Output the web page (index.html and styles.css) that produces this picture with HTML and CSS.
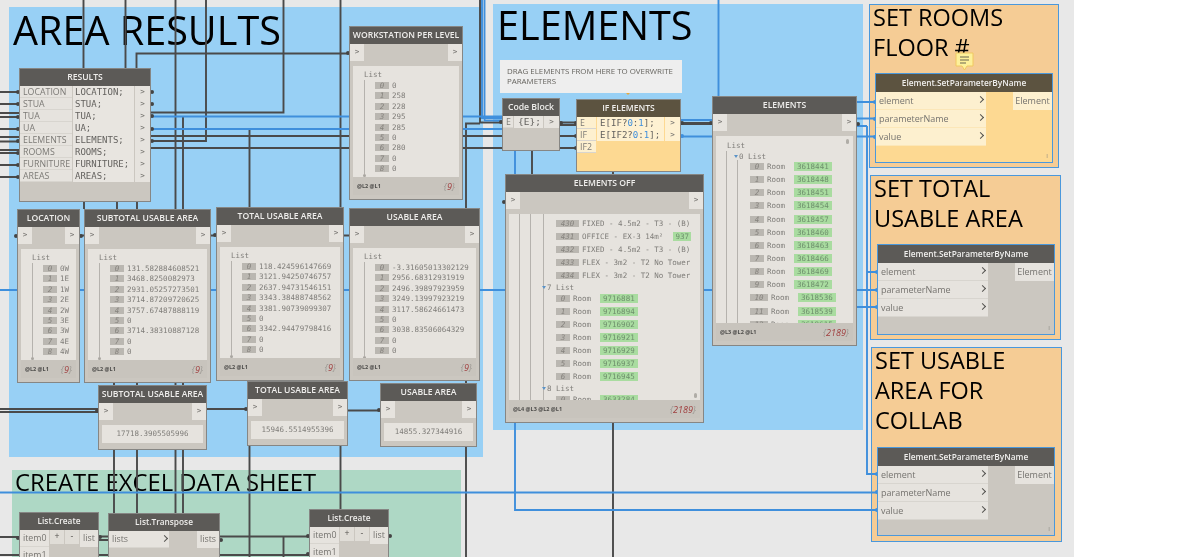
FILE: index.html
```html
<!DOCTYPE html>
<html lang="en">
<head>
  <meta charset="UTF-8" />
  <title>Area results graph</title>
  <link rel="stylesheet" href="styles.css">
</head>
<body>
<main class="canvas">

  <!-- groups -->
  <section class="group g-area"><h2>AREA RESULTS</h2></section>
  <section class="group g-elements"><h2>ELEMENTS</h2></section>
  <section class="group g-excel"><h2>CREATE EXCEL DATA SHEET</h2></section>
  <section class="group g-orange g-set1"><h2>SET ROOMS<br>FLOOR #</h2></section>
  <section class="group g-orange g-set2"><h2>SET TOTAL<br>USABLE AREA</h2></section>
  <section class="group g-orange g-set3"><h2>SET USABLE<br>AREA FOR<br>COLLAB</h2></section>

  <!-- wires -->
  <svg class="wires" width="1074" height="557" viewBox="0 0 1074 557">
    <g class="wire-dark">
      <path d="M0 92H19M0 104H19M0 113H19M0 117H19M0 129H19M0 137H19M0 141.500H19M0 150H19M0 153H19M0 165H19M0 177H19"/>
      <path d="M83.500 0V68M125.500 0V68M136.500 68V53.500H349"/>
      <path d="M175.500 0V513M183 116V513M249.500 129V557M340.500 0V509"/>
      <path d="M206 0V141H151M283.500 0V112.500H151"/>
      <path d="M480 0V122.500H502M466 557V123.500H480"/>
      <path d="M151 136H577M151 148H577"/>
      <path d="M84 202V209M117 202V209M137 202V209M114 383V513M137 383V513"/>
      <path d="M80 235.500H84M211 235.500H216M344 235.500H349"/>
      <path d="M0 409H98M0 412H98M207 409H247M348 410.500H380"/>
      <path d="M560 122.500H577M560 125H577"/>
      <path d="M532 151V174M613 172V174M613 423V557"/>
      <path class="thick" d="M681 123.500H712"/>
      <path d="M0 537H19M99 536.500H108M99 540H108M220 536.500H309M0 555H19M99 555H108M220 555H309M283.500 537V557"/>
    </g>
    <g class="wire-blue">
      <path d="M0 290H877"/>
      <path d="M151 116.500H502M151 129H502M482 0V118H502M484.500 0V120.500H502"/>
      <path d="M681 120H712M681 136.500H712M718.500 0V96"/>
      <path d="M857 102H875M857 118.500H875M857 136.500H875M857 126H867M867 126V474H877"/>
      <path d="M867 272H877M857 307H877"/>
      <path d="M0 492.500H877M515 151V510H877"/>
    </g>
    <g class="dots-dark">
      <circle cx="18" cy="92" r="2"/><circle cx="18" cy="104" r="2"/><circle cx="18" cy="117" r="2"/><circle cx="18" cy="129" r="2"/>
      <circle cx="18" cy="141" r="2"/><circle cx="18" cy="153" r="2"/><circle cx="18" cy="165" r="2"/><circle cx="18" cy="177" r="2"/>
      <circle cx="152" cy="92" r="2"/><circle cx="152" cy="104" r="2"/><circle cx="152" cy="116" r="2"/><circle cx="152" cy="129" r="2"/><circle cx="152" cy="141" r="2"/>
      <circle cx="348" cy="53" r="2"/><circle cx="16" cy="236" r="2"/><circle cx="81" cy="236" r="2"/><circle cx="215" cy="235" r="2"/>
      <circle cx="501" cy="122" r="2"/><circle cx="561" cy="123" r="2"/><circle cx="576" cy="123" r="2"/><circle cx="576" cy="136" r="2"/><circle cx="576" cy="148" r="2"/>
      <circle cx="682" cy="123" r="2"/><circle cx="711" cy="123" r="2"/><circle cx="858" cy="124" r="2"/><circle cx="504" cy="202" r="2"/>
      <circle cx="97" cy="411" r="2"/><circle cx="246" cy="409" r="2"/><circle cx="379" cy="410" r="2"/>
      <circle cx="18" cy="538" r="2"/><circle cx="100" cy="537" r="2"/><circle cx="221" cy="540" r="2"/><circle cx="308" cy="536" r="2"/><circle cx="308" cy="554" r="2"/><circle cx="390" cy="536" r="2"/>
    </g>
    <g class="dots-blue">
      <circle cx="682" cy="136" r="2"/><circle cx="875" cy="102" r="2"/><circle cx="875" cy="119" r="2"/><circle cx="875" cy="137" r="2"/>
      <circle cx="877" cy="272" r="2"/><circle cx="877" cy="290" r="2"/><circle cx="877" cy="307" r="2"/>
      <circle cx="877" cy="474" r="2"/><circle cx="877" cy="492" r="2"/><circle cx="877" cy="510" r="2"/>
    </g>
  </svg>

  <!-- results code block -->
  <article class="node n-results">
    <header class="node-head">RESULTS</header>
    <div class="cb-body">
      <div class="cb-inputs">
        <span>LOCATION</span><span>STUA</span><span>TUA</span><span>UA</span><span>ELEMENTS</span><span>ROOMS</span><span>FURNITURE</span><span>AREAS</span>
      </div>
      <div class="cb-code">
        <span>LOCATION;</span><span>STUA;</span><span>TUA;</span><span>UA;</span><span>ELEMENTS;</span><span>ROOMS;</span><span>FURNITURE;</span><span>AREAS;</span>
      </div>
      <div class="cb-outs">
        <span>&gt;</span><span>&gt;</span><span>&gt;</span><span>&gt;</span><span>&gt;</span><span>&gt;</span><span>&gt;</span><span>&gt;</span>
      </div>
    </div>
  </article>

  <!-- watch nodes -->
  <article class="node watch n-workstation">
    <header class="node-head">WORKSTATION PER LEVEL</header>
    <div class="ports"><span>&gt;</span><span>&gt;</span></div>
    <div class="preview">
      <div class="label">List</div>
      <div class="tree">
        <div class="row"><i>0</i><b>0</b></div>
        <div class="row"><i>1</i><b>258</b></div>
        <div class="row"><i>2</i><b>228</b></div>
        <div class="row"><i>3</i><b>295</b></div>
        <div class="row"><i>4</i><b>285</b></div>
        <div class="row"><i>5</i><b>0</b></div>
        <div class="row"><i>6</i><b>280</b></div>
        <div class="row"><i>7</i><b>0</b></div>
        <div class="row"><i>8</i><b>0</b></div>
      </div>
    </div>
    <footer class="levels"><span>@L2 @L1</span><em>{<u>9</u>}</em></footer>
  </article>

  <article class="node watch n-location">
    <header class="node-head">LOCATION</header>
    <div class="ports"><span>&gt;</span><span>&gt;</span></div>
    <div class="preview">
      <div class="label">List</div>
      <div class="tree">
        <div class="row"><i>0</i><b>0W</b></div>
        <div class="row"><i>1</i><b>1E</b></div>
        <div class="row"><i>2</i><b>1W</b></div>
        <div class="row"><i>3</i><b>2E</b></div>
        <div class="row"><i>4</i><b>2W</b></div>
        <div class="row"><i>5</i><b>3E</b></div>
        <div class="row"><i>6</i><b>3W</b></div>
        <div class="row"><i>7</i><b>4E</b></div>
        <div class="row"><i>8</i><b>4W</b></div>
      </div>
    </div>
    <footer class="levels"><span>@L2 @L1</span><em>{<u>9</u>}</em></footer>
  </article>

  <article class="node watch n-subtotal">
    <header class="node-head">SUBTOTAL USABLE AREA</header>
    <div class="ports"><span>&gt;</span><span>&gt;</span></div>
    <div class="preview">
      <div class="label">List</div>
      <div class="tree">
        <div class="row"><i>0</i><b>131.582884608521</b></div>
        <div class="row"><i>1</i><b>3468.8250082973</b></div>
        <div class="row"><i>2</i><b>2931.05257273501</b></div>
        <div class="row"><i>3</i><b>3714.87209720625</b></div>
        <div class="row"><i>4</i><b>3757.67487888119</b></div>
        <div class="row"><i>5</i><b>0</b></div>
        <div class="row"><i>6</i><b>3714.38310887128</b></div>
        <div class="row"><i>7</i><b>0</b></div>
        <div class="row"><i>8</i><b>0</b></div>
      </div>
    </div>
    <footer class="levels"><span>@L2 @L1</span><em>{<u>9</u>}</em></footer>
  </article>

  <article class="node watch n-total">
    <header class="node-head">TOTAL USABLE AREA</header>
    <div class="ports"><span>&gt;</span><span>&gt;</span></div>
    <div class="preview">
      <div class="label">List</div>
      <div class="tree">
        <div class="row"><i>0</i><b>118.424596147669</b></div>
        <div class="row"><i>1</i><b>3121.94250746757</b></div>
        <div class="row"><i>2</i><b>2637.94731546151</b></div>
        <div class="row"><i>3</i><b>3343.38488748562</b></div>
        <div class="row"><i>4</i><b>3381.90739099307</b></div>
        <div class="row"><i>5</i><b>0</b></div>
        <div class="row"><i>6</i><b>3342.94479798416</b></div>
        <div class="row"><i>7</i><b>0</b></div>
        <div class="row"><i>8</i><b>0</b></div>
      </div>
    </div>
    <footer class="levels"><span>@L2 @L1</span><em>{<u>9</u>}</em></footer>
  </article>

  <article class="node watch n-usable">
    <header class="node-head">USABLE AREA</header>
    <div class="ports"><span>&gt;</span><span>&gt;</span></div>
    <div class="preview">
      <div class="label">List</div>
      <div class="tree">
        <div class="row"><i>0</i><b>-3.31605013302129</b></div>
        <div class="row"><i>1</i><b>2956.68312931919</b></div>
        <div class="row"><i>2</i><b>2496.39897923959</b></div>
        <div class="row"><i>3</i><b>3249.13997923219</b></div>
        <div class="row"><i>4</i><b>3117.58624661473</b></div>
        <div class="row"><i>5</i><b>0</b></div>
        <div class="row"><i>6</i><b>3038.83506064329</b></div>
        <div class="row"><i>7</i><b>0</b></div>
        <div class="row"><i>8</i><b>0</b></div>
      </div>
    </div>
    <footer class="levels"><span>@L2 @L1</span><em>{<u>9</u>}</em></footer>
  </article>

  <!-- single value watches -->
  <article class="node watch n-sub-single">
    <header class="node-head">SUBTOTAL USABLE AREA</header>
    <div class="ports"><span>&gt;</span><span>&gt;</span></div>
    <div class="single">17718.3905505996</div>
  </article>
  <article class="node watch n-total-single">
    <header class="node-head">TOTAL USABLE AREA</header>
    <div class="ports"><span>&gt;</span><span>&gt;</span></div>
    <div class="single">15946.5514955396</div>
  </article>
  <article class="node watch n-usable-single">
    <header class="node-head">USABLE AREA</header>
    <div class="ports"><span>&gt;</span><span>&gt;</span></div>
    <div class="single">14855.327344916</div>
  </article>

  <!-- elements group -->
  <aside class="note">DRAG ELEMENTS FROM HERE TO OVERWRITE<br>PARAMETERS</aside>

  <article class="node n-codeblock">
    <header class="node-head head-serif">Code Block</header>
    <div class="cb-body">
      <div class="cb-inputs"><span>E</span></div>
      <div class="cb-code"><span>{E};</span></div>
      <div class="cb-outs"><span>&gt;</span></div>
    </div>
  </article>

  <article class="node warm n-if">
    <header class="node-head">IF ELEMENTS</header>
    <div class="cb-body">
      <div class="cb-inputs"><span>E</span><span>IF</span><span>IF2</span></div>
      <div class="cb-code">
        <span>E[IF?<s>0</s>:<s>1</s>];</span>
        <span>E[IF2?<s>0</s>:<s>1</s>];</span>
      </div>
      <div class="cb-outs"><span>&gt;</span><span>&gt;</span></div>
    </div>
  </article>

  <article class="node watch n-off">
    <header class="node-head">ELEMENTS OFF</header>
    <div class="ports"><span>&gt;</span><span>&gt;</span></div>
    <div class="preview preview-tall">
      <div class="nest nest-1"><div class="nest nest-2">
        <div class="tree tree-off">
          <div class="row row-long"><i>430</i><b>FIXED - 4.5m2 - T3 - (B)</b></div>
          <div class="row row-long"><i>431</i><b>OFFICE - EX-3 14m²</b><mark class="mark-tail">937</mark></div>
          <div class="row row-long"><i>432</i><b>FIXED - 4.5m2 - T3 - (B)</b></div>
          <div class="row row-long"><i>433</i><b>FLEX - 3m2 - T2 No Tower</b></div>
          <div class="row row-long"><i>434</i><b>FLEX - 3m2 - T2 No Tower</b></div>
          <div class="sub-label"><span class="caret"></span>7 List</div>
          <div class="row"><i>0</i><b>Room</b><mark>9716881</mark></div>
          <div class="row"><i>1</i><b>Room</b><mark>9716894</mark></div>
          <div class="row"><i>2</i><b>Room</b><mark>9716902</mark></div>
          <div class="row"><i>3</i><b>Room</b><mark>9716921</mark></div>
          <div class="row"><i>4</i><b>Room</b><mark>9716929</mark></div>
          <div class="row"><i>5</i><b>Room</b><mark>9716937</mark></div>
          <div class="row"><i>6</i><b>Room</b><mark>9716945</mark></div>
          <div class="sub-label"><span class="caret"></span>8 List</div>
          <div class="row"><i>0</i><b>Room</b><mark>3633284</mark></div>
        </div>
      </div></div>
      <span class="scroll-dot dot-off"></span>
    </div>
    <footer class="levels"><span>@L4 @L3 @L2 @L1</span><em>{<u>2189</u>}</em></footer>
  </article>

  <article class="node watch n-elements">
    <header class="node-head">ELEMENTS</header>
    <div class="ports"><span>&gt;</span><span>&gt;</span></div>
    <div class="preview preview-tall">
      <div class="label">List</div>
      <div class="nest nest-el">
        <div class="sub-label"><span class="caret"></span>0 List</div>
        <div class="tree tree-el">
          <div class="row"><i>0</i><b>Room</b><mark>3618441</mark></div>
          <div class="row"><i>1</i><b>Room</b><mark>3618448</mark></div>
          <div class="row"><i>2</i><b>Room</b><mark>3618451</mark></div>
          <div class="row"><i>3</i><b>Room</b><mark>3618454</mark></div>
          <div class="row"><i>4</i><b>Room</b><mark>3618457</mark></div>
          <div class="row"><i>5</i><b>Room</b><mark>3618460</mark></div>
          <div class="row"><i>6</i><b>Room</b><mark>3618463</mark></div>
          <div class="row"><i>7</i><b>Room</b><mark>3618466</mark></div>
          <div class="row"><i>8</i><b>Room</b><mark>3618469</mark></div>
          <div class="row"><i>9</i><b>Room</b><mark>3618472</mark></div>
          <div class="row wide-idx"><i>10</i><b>Room</b><mark>3618536</mark></div>
          <div class="row wide-idx"><i>11</i><b>Room</b><mark>3618539</mark></div>
          <div class="row wide-idx"><i>12</i><b>Room</b><mark>3618615</mark></div>
        </div>
      </div>
      <span class="scroll-dot dot-el"></span>
    </div>
    <footer class="levels"><span>@L3 @L2 @L1</span><em>{<u>2189</u>}</em></footer>
  </article>

  <!-- set parameter nodes -->
  <svg class="pin" width="19" height="19" viewBox="0 0 19 19">
    <path d="M1 1H18V14H12L9.500 18L7 14H1Z" fill="#fdf09a" stroke="#f0c860"/>
    <path d="M5 5H14M5 8H14M5 11H11" stroke="#6b6650" fill="none"/>
  </svg>

  <article class="node setparam warm n-sp1">
    <header class="node-head head-lower">Element.SetParameterByName</header>
    <div class="sp-body">
      <div class="sp-in"><span>element</span><span>parameterName</span><span>value</span></div>
      <div class="sp-out">Element</div>
    </div>
    <span class="lacing">I</span>
  </article>
  <article class="node setparam n-sp2">
    <header class="node-head head-lower">Element.SetParameterByName</header>
    <div class="sp-body">
      <div class="sp-in"><span>element</span><span>parameterName</span><span>value</span></div>
      <div class="sp-out">Element</div>
    </div>
    <span class="lacing">I</span>
  </article>
  <article class="node setparam n-sp3">
    <header class="node-head head-lower">Element.SetParameterByName</header>
    <div class="sp-body">
      <div class="sp-in"><span>element</span><span>parameterName</span><span>value</span></div>
      <div class="sp-out">Element</div>
    </div>
    <span class="lacing">I</span>
  </article>

  <!-- excel group -->
  <article class="node listnode n-lc1">
    <header class="node-head head-lower">List.Create</header>
    <div class="lc-body">
      <div class="lc-in"><span>item0</span><span>item1</span></div>
      <div class="lc-btns"><span>+</span><span>-</span></div>
      <div class="lc-out">list</div>
    </div>
  </article>
  <article class="node listnode n-lt">
    <header class="node-head head-lower">List.Transpose</header>
    <div class="lc-body">
      <div class="lc-in lc-chev"><span>lists</span></div>
      <div class="lc-out lc-out-right">lists</div>
    </div>
  </article>
  <article class="node listnode n-lc2">
    <header class="node-head head-lower">List.Create</header>
    <div class="lc-body">
      <div class="lc-in"><span>item0</span><span>item1</span></div>
      <div class="lc-btns"><span>+</span><span>-</span></div>
      <div class="lc-out">list</div>
    </div>
  </article>

</main>
</body>
</html>
```

FILE: styles.css
```css
body {
  margin: 0;
  background: #fff;
}

.canvas {
  position: relative;
  width: 1074px;
  height: 557px;
  overflow: hidden;
  background: #e8e8e8;
  font-family: "Open Sans", sans-serif;
  filter: blur(0.3px);
}

/* groups */
.group {
  position: absolute;
  box-sizing: border-box;
}

.group h2 {
  margin: 0;
  font-weight: 400;
  color: #000;
}

.g-area { left: 9px; top: 7px; width: 474px; height: 450px; background: #98d0f5; }
.g-area h2 { font-size: 39.6px; line-height: 46px; margin-left: 4px; }

.g-elements { left: 493px; top: 4px; width: 370px; height: 426px; background: #98d0f5; }
.g-elements h2 { font-size: 39.6px; line-height: 43px; margin-left: 4px; }

.g-excel { left: 12px; top: 470px; width: 449px; height: 87px; background: #aed8c5; }
.g-excel h2 { font-size: 23.8px; line-height: 25px; margin-left: 3px; }

.g-orange { background: #f5cc95; border: 1.5px solid #4a98dc; }
.g-orange h2 { font-size: 23.5px; line-height: 30px; margin: -3px 0 0 3px; }

.g-set1 { left: 869px; top: 4px; width: 190px; height: 164px; }
.g-set2 { left: 870px; top: 175px; width: 191px; height: 165px; }
.g-set3 { left: 871px; top: 347px; width: 191px; height: 195px; }

/* wires */
.wires { position: absolute; left: 0; top: 0; }

.wire-dark path { fill: none; stroke: #4a4a4a; stroke-width: 1.9; }
.wire-dark .thick { stroke-width: 3; }
.wire-blue path { fill: none; stroke: #3f8fdc; stroke-width: 1.9; }
.dots-dark { fill: #444; }
.dots-blue { fill: #3f8fdc; }

/* nodes */
.node {
  position: absolute;
  box-sizing: border-box;
  display: flex;
  flex-direction: column;
  background: #cbc7c0;
  border: 1px solid #868684;
  color: #75736f;
  overflow: hidden;
}

.node-head {
  flex: none;
  box-sizing: border-box;
  height: 17px;
  padding-bottom: 2px;
  display: flex;
  align-items: center;
  justify-content: center;
  background: #5c5a57;
  color: #efeeec;
  font-size: 8.6px;
  font-weight: 600;
  white-space: nowrap;
}

.warm { background: #fdd992; }
.warm .node-head { background: #5c5340; }

.head-serif { font-size: 8.7px; }
.head-lower { font-size: 8.3px; }

.n-results { left: 19px; top: 68px; width: 132px; height: 134px; }
.n-workstation { left: 349px; top: 26px; width: 114px; height: 174px; }
.n-location { left: 17px; top: 209px; width: 63px; height: 174px; }
.n-subtotal { left: 84px; top: 209px; width: 127px; height: 174px; }
.n-total { left: 216px; top: 207px; width: 128px; height: 174px; }
.n-usable { left: 349px; top: 208px; width: 131px; height: 173px; }
.n-sub-single { left: 98px; top: 385px; width: 109px; height: 65px; }
.n-total-single { left: 247px; top: 381px; width: 101px; height: 65px; }
.n-usable-single { left: 380px; top: 383px; width: 97px; height: 64px; }
.n-codeblock { left: 502px; top: 98px; width: 58px; height: 53px; }
.n-if { left: 576px; top: 99px; width: 105px; height: 73px; }
.n-off { left: 505px; top: 174px; width: 199px; height: 249px; }
.n-elements { left: 712px; top: 96px; width: 145px; height: 250px; }
.n-sp1 { left: 875px; top: 73px; width: 178px; height: 90px; }
.n-sp2 { left: 877px; top: 244px; width: 178px; height: 91px; }
.n-sp3 { left: 877px; top: 447px; width: 178px; height: 89px; }
.n-lc1 { left: 19px; top: 512px; width: 80px; height: 60px; }
.n-lt { left: 108px; top: 513px; width: 112px; height: 60px; }
.n-lc2 { left: 309px; top: 509px; width: 80px; height: 60px; }

/* code blocks */
.cb-body {
  display: flex;
  font-size: 8.6px;
}

.cb-inputs span,
.cb-code span,
.cb-outs span {
  display: block;
  height: 12px;
  line-height: 12px;
  white-space: nowrap;
}

.cb-inputs { flex: none; }

.cb-inputs span {
  padding-left: 3px;
  background: #e6e3de;
  border-bottom: 1px solid #d8d5cf;
  box-sizing: border-box;
  color: #7c7a76;
  font-size: 8.8px;
}

.cb-code {
  margin: 0 1px;
  flex: 1;
  font-family: "DejaVu Sans Mono", monospace;
  font-size: 9px;
  color: #63615e;
}

.cb-code span { padding-left: 2px; background: #e8e5e0; }

.cb-outs { flex: none; width: 15px; }

.cb-outs span {
  background: #e6e3de;
  text-align: center;
  font-family: "DejaVu Sans Mono", monospace;
  font-size: 7.5px;
}

.n-results .cb-inputs { width: 52px; }
.n-codeblock .cb-inputs { width: 10px; }
.n-codeblock .cb-code { font-size: 9.5px; }
.n-codeblock .cb-code span { padding-left: 4px; }
.n-if .cb-inputs { width: 19px; }
.n-if .cb-inputs span { background: #fdf0cf; }
.n-if .cb-code span { background: #fef1d2; padding-left: 3px; }
.n-if .cb-code { font-size: 9.1px; }
.n-if .cb-outs span { background: #fef1d2; }
.n-if s { color: #3f8fdc; text-decoration: none; }

/* watch */
.ports {
  flex: none;
  display: flex;
  justify-content: space-between;
  height: 17px;
}

.ports span {
  width: 14px;
  background: #e6e3de;
  text-align: center;
  line-height: 15px;
  font-family: "DejaVu Sans Mono", monospace;
  font-size: 7.5px;
}

.preview {
  position: relative;
  flex: 1;
  min-height: 0;
  margin: 5px 3px 0;
  padding-top: 4px;
  overflow: hidden;
  background: #e6e3de;
  font-family: "DejaVu Sans Mono", monospace;
  font-size: 7.5px;
  color: #7f7d79;
}

.label {
  height: 10.4px;
  line-height: 10.4px;
  padding-left: 11px;
}

.tree {
  position: relative;
  margin-left: 11px;
  padding-left: 10px;
  border-left: 1px solid #b5b2ad;
}

.tree:not(.tree-off):not(.tree-el)::after {
  content: "";
  position: absolute;
  left: -2px;
  bottom: -3px;
  width: 3px;
  height: 3px;
  border-radius: 50%;
  background: #a9a6a0;
}

.row {
  display: flex;
  align-items: center;
  height: 10.4px;
  white-space: nowrap;
}

.row i {
  flex: none;
  width: 14px;
  height: 7px;
  margin-right: 3px;
  background: #bab7b1;
  color: #85827d;
  text-align: center;
  line-height: 7px;
}

.row b { font-weight: 400; }

.row mark {
  flex: none;
  height: 9px;
  line-height: 9px;
  margin-left: 9px;
  padding: 0 3px;
  background: #a9dca0;
  color: #6e8f6c;
}

.single {
  flex: none;
  margin: 5px 3px 0;
  height: 18px;
  line-height: 18px;
  text-align: center;
  background: #e6e3de;
  font-family: "DejaVu Sans Mono", monospace;
  font-size: 7.5px;
  color: #7f7d79;
}

.levels {
  flex: none;
  display: flex;
  justify-content: space-between;
  align-items: center;
  height: 18px;
  margin: 0 3px 4px;
  padding: 0 4px;
  background: #c8c4bd;
  font-size: 5.5px;
  font-weight: 700;
  color: #4d4c4a;
}

.levels em {
  font-size: 9px;
  font-weight: 400;
  color: #9a9792;
}

.levels u { color: #a04040; text-decoration: none; }

/* tall trees, element lists */
.n-elements .preview-tall { padding-top: 5px; }

.nest { border-left: 1px solid #b5b2ad; }
.nest-1 { margin-left: 10px; margin-top: -4px; padding-left: 10px; }
.nest-2 { padding-left: 12px; }

.nest-el { margin-left: 10px; padding-left: 7px; }

.tree-off { margin-left: 0; padding-top: 3px; padding-left: 12px; }
.tree-el { margin-left: 3px; margin-top: -1.5px; padding-left: 12px; }

.tree-off .row { height: 13px; padding-right: 12px; }
.tree-el .row { height: 13.15px; }

.row-long { width: 135px; }
.row-long i { width: 23px; }
.row-long .mark-tail { margin-left: auto; padding: 0 2px; }
.wide-idx i { width: 18px; }

.sub-label {
  display: flex;
  align-items: center;
  height: 10px;
}

.tree-off .sub-label { margin-left: -14px; }

.caret {
  width: 0;
  height: 0;
  margin-right: 1px;
  border: 2.5px solid transparent;
  border-top: 3px solid #5b93c7;
  border-bottom: 0;
}

.scroll-dot {
  position: absolute;
  width: 3px;
  height: 5px;
  border-radius: 2px;
  background: #b0ada7;
}

.dot-off { right: 3px; bottom: 2px; }
.dot-el { right: 4px; top: 3px; }

/* note */
.note {
  position: absolute;
  left: 500px;
  top: 60px;
  width: 182px;
  height: 33px;
  box-sizing: border-box;
  padding: 6px 7px;
  background: #eeeeee;
  font-size: 7.9px;
  line-height: 10px;
  white-space: nowrap;
  color: #66645f;
}

.note::after {
  content: "";
  position: absolute;
  left: 126px;
  bottom: -2px;
  width: 0;
  height: 0;
  border: 2px solid transparent;
  border-top: 2px solid #e7a93c;
  border-bottom: 0;
}

.pin { position: absolute; left: 955px; top: 52px; }

/* set parameter */
.setparam { border: 1.5px solid #4a98dc; }
.setparam .node-head { height: 18px; }

.sp-body {
  display: flex;
  justify-content: space-between;
  font-size: 9px;
  color: #75736f;
}

.sp-in { width: 110px; }

.sp-in span {
  position: relative;
  display: block;
  height: 18px;
  line-height: 17px;
  padding-left: 3px;
  box-sizing: border-box;
  background: #e6e3de;
  border-bottom: 1px solid #d8d5cf;
}

.sp-in span::after {
  content: "";
  position: absolute;
  right: 3px;
  top: 5px;
  width: 4px;
  height: 4px;
  border-top: 1.8px solid #54524f;
  border-right: 1.8px solid #54524f;
  transform: rotate(45deg);
}

.sp-out {
  width: 39px;
  height: 18px;
  line-height: 17px;
  text-align: center;
  background: #e6e3de;
}

.warm .sp-in span { background: #fdf0cf; border-bottom-color: #fce7b8; }
.warm .sp-out { background: #fdf0cf; }

.lacing {
  position: absolute;
  right: 4px;
  bottom: 2px;
  font-size: 6px;
  color: #8b8883;
}

/* excel lists */
.lc-body {
  display: flex;
  font-size: 8.8px;
}

.lc-in { flex: none; width: 29px; }

.lc-in span {
  display: block;
  height: 17px;
  line-height: 17px;
  padding-left: 3px;
  background: #e6e3de;
  border-bottom: 1px solid #d8d5cf;
  box-sizing: border-box;
}

.lc-btns { flex: none; display: flex; gap: 1px; margin-left: 1px; }

.lc-btns span {
  width: 14px;
  height: 14px;
  line-height: 13px;
  text-align: center;
  background: #e0ddd7;
  color: #55534f;
}

.lc-out {
  width: 18px;
  height: 17px;
  line-height: 17px;
  margin-left: auto;
  text-align: center;
  background: #e6e3de;
}

.lc-chev { width: 60px; }

.lc-chev span { position: relative; }

.lc-chev span::after {
  content: "";
  position: absolute;
  right: 2px;
  top: 5px;
  width: 4px;
  height: 4px;
  border-top: 1.8px solid #54524f;
  border-right: 1.8px solid #54524f;
  transform: rotate(45deg);
}

.lc-out-right { width: 22px; }
```
